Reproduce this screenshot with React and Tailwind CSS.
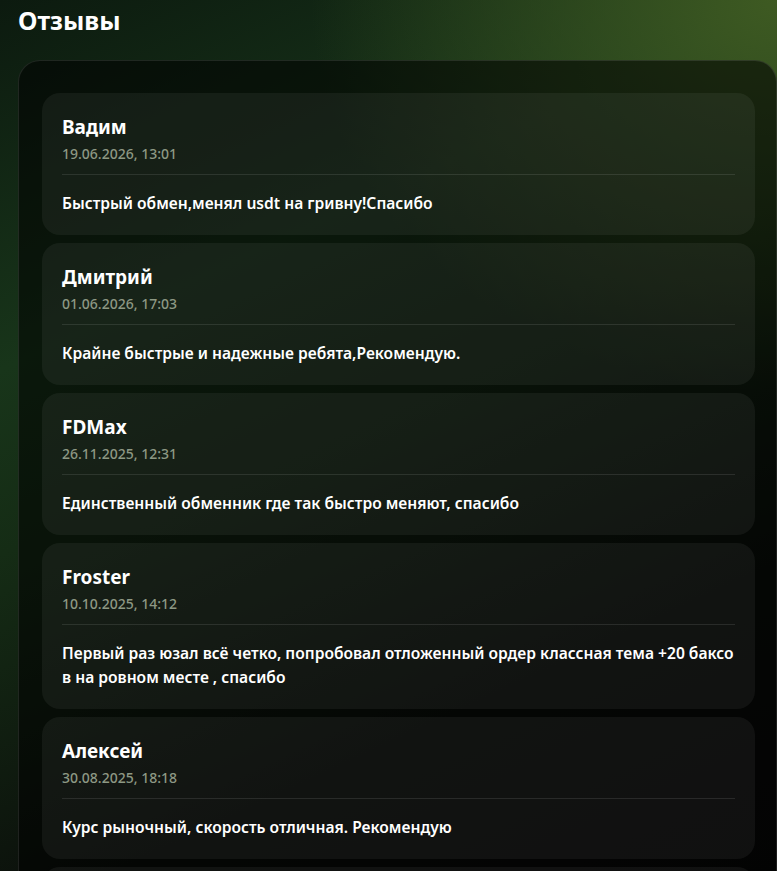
import React from "react";

const reviews = [
  { id: 1, name: "Вадим", date: "19.06.2026, 13:01", text: "Быстрый обмен,менял usdt на гривну!Спасибо" },
  { id: 2, name: "Дмитрий", date: "01.06.2026, 17:03", text: "Крайне быстрые и надежные ребята,Рекомендую." },
  { id: 3, name: "FDMax", date: "26.11.2025, 12:31", text: "Единственный обменник где так быстро меняют, спасибо" },
  {
    id: 4,
    name: "Froster",
    date: "10.10.2025, 14:12",
    text: "Первый раз юзал всё четко, попробовал отложенный ордер классная тема +20 баксов на ровном месте , спасибо",
  },
  { id: 5, name: "Алексей", date: "30.08.2025, 18:18", text: "Курс рыночный, скорость отличная. Рекомендую" },
  { id: 6, name: "Игорь", date: "14.08.2025, 09:47", text: "Всё прошло быстро и без проблем." },
];

function ReviewCard({ r }) {
  return (
    <div className="rounded-[18px] bg-white/[0.055] px-5 pt-5 pb-5">
      <div className="text-[19px] leading-[28px] font-bold text-white">{r.name}</div>
      <div className="mt-[3px] text-[14px] leading-[20px] font-medium text-[#8d9884]">{r.date}</div>
      <div className="mt-[10px] h-px bg-white/10" />
      <p className="mt-4 text-[15.6px] leading-[24px] font-semibold text-white break-all">{r.text}</p>
    </div>
  );
}

export default function App() {
  return (
    <div
      className="h-[871px] overflow-hidden bg-[radial-gradient(ellipse_60%_45%_at_100%_0%,#3e5a22_0%,transparent_100%),linear-gradient(155deg,#0c1a0f_0%,#18351a_30%,#152c15_45%,#0b0f0b_75%,#080808_100%)]"
      style={{ fontFamily: '"Noto Sans", "Open Sans", sans-serif' }}
    >
      <h2 className="pl-[18px] pt-[4px] text-[25px] leading-[32px] font-bold text-white">Отзывы</h2>

      <div className="mt-[24px] ml-[18px] rounded-[22px] border border-white/10 bg-black/55 pl-[23px] pr-[21px] pt-8">
        <div className="flex flex-col gap-2">
          {reviews.map((r) => (
            <ReviewCard key={r.id} r={r} />
          ))}
        </div>
      </div>
    </div>
  );
}
